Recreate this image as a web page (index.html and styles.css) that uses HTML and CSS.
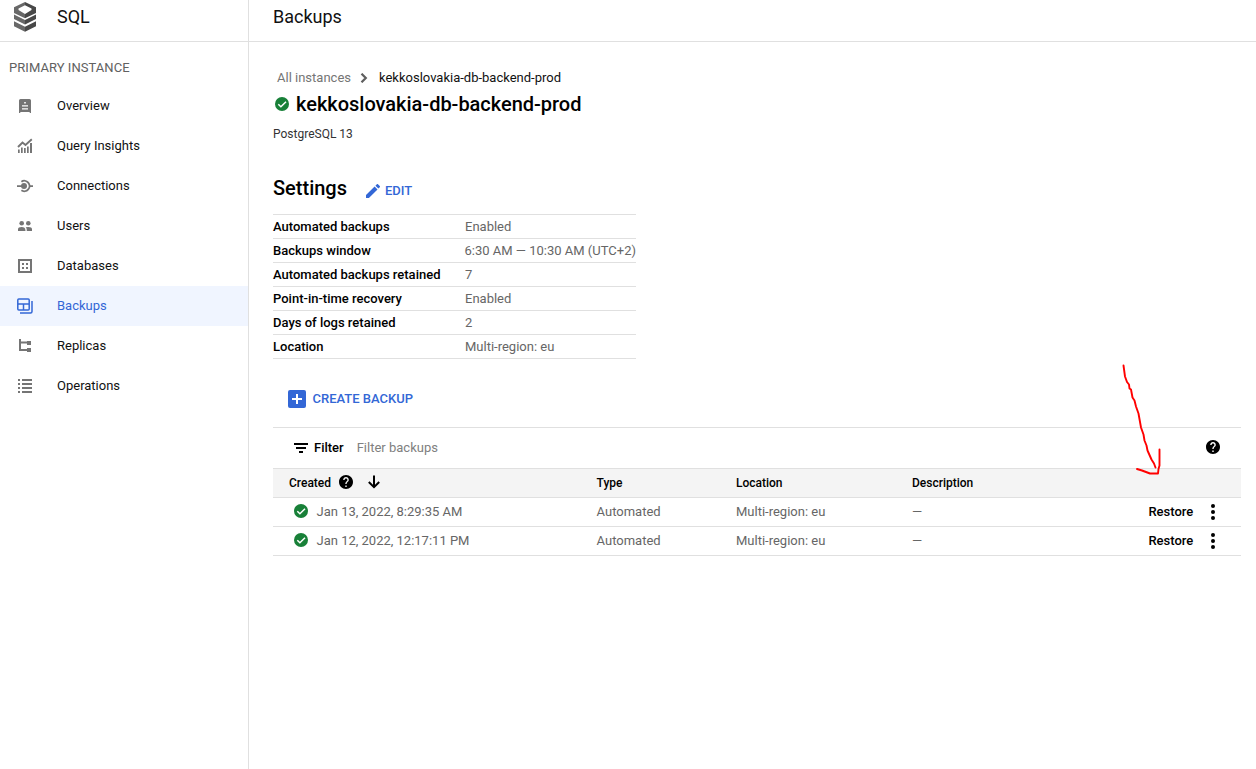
FILE: index.html
```html
<!DOCTYPE html>
<html lang="en">
<head>
<meta charset="utf-8">
<title>Backups – SQL</title>
<link rel="stylesheet" href="styles.css">
</head>
<body>
<svg class="defs" width="0" height="0">
  <symbol id="ok" viewBox="0 0 14 14"><circle cx="7" cy="7" r="7" fill="#188038"/><path d="M3.3 7.2 5.900 9.800 11 4.700" fill="none" stroke="#fff" stroke-width="1.500"/></symbol>
  <symbol id="help" viewBox="2 2 20 20"><path d="M12 2C6.480 2 2 6.480 2 12s4.480 10 10 10 10-4.480 10-10S17.520 2 12 2zm1 17h-2v-2h2v2zm2.070-7.750-.9.920C13.450 12.900 13 13.500 13 15h-2v-.5c0-1.100.45-2.100 1.170-2.830l1.240-1.260c.37-.36.59-.86.59-1.410 0-1.100-.9-2-2-2s-2 .9-2 2H8c0-2.210 1.790-4 4-4s4 1.790 4 4c0 .88-.36 1.680-.93 2.250z"/></symbol>
  <symbol id="more" viewBox="0 0 4 16"><circle cx="2" cy="2" r="2"/><circle cx="2" cy="8" r="2"/><circle cx="2" cy="14" r="2"/></symbol>
</svg>
<div class="app">
  <aside class="sidebar">
    <div class="product">
      <svg class="logo" width="22" height="30" viewBox="0 0 22 30">
        <path d="M11 0 0 5.300v5.700l11 5.300v-4.300L4.500 8V6.500L11 3.200z" fill="#686868"/>
        <path d="M11 0 22 5.300v5.700l-11 5.300v-4.300L17.500 8V6.500L11 3.200z" fill="#484848"/>
        <path d="M0 12.500 11 18v4.600L0 17.100z" fill="#686868"/><path d="M22 12.500 11 18v4.600l11-5.500z" fill="#484848"/>
        <path d="M0 19.300 11 24.800v4.900L0 24.200z" fill="#686868"/><path d="M22 19.300 11 24.800v4.900l11-5.500z" fill="#484848"/>
      </svg>
      <span class="product-name">SQL</span>
    </div>
    <h2 class="section-label">PRIMARY INSTANCE</h2>
    <nav class="nav">
      <a class="nav-item"><svg width="16" height="16" viewBox="0 0 16 16"><path fill-rule="evenodd" d="M3.500 1h9Q14 1 14 2.500V15h-1.300v-1H3.300v1H2V2.500Q2 1 3.500 1zM7.200 4v1.500h1.600V4zM5 7.300v1.200h6V7.300zm0 2.900v1.200h6v-1.200z"/></svg><span>Overview</span></a>
      <a class="nav-item"><svg width="16" height="16" viewBox="0 0 16 16"><path d="M1 11.500h1.700V15H1zM4 9.500h1.700V15H4zM7 10h1.700v5H7zM10 8.500h1.700V15H10zM13 5h2v10h-2z"/><path d="M1 9 5.500 4.500 8.500 7 14.800 1.300" fill="none" stroke="currentColor" stroke-width="1.900"/></svg><span>Query Insights</span></a>
      <a class="nav-item"><svg width="16" height="16" viewBox="0 0 16 16"><circle cx="7" cy="8" r="3"/><path d="M0 7.200h6v1.700H0zM12 7.200h4v1.700h-4z"/><path d="M4.400 3.700A5.200 5.200 0 1 1 4.400 12.300" fill="none" stroke="currentColor" stroke-width="1.900"/></svg><span>Connections</span></a>
      <a class="nav-item"><svg width="16" height="16" viewBox="0 0 16 16"><circle cx="4.700" cy="5.200" r="2.300"/><circle cx="11.300" cy="5.200" r="2.300"/><path d="M1 13v-1.800Q1 9 4.700 9q1.700 0 2.800.7Q8.500 10.400 8.500 13zM9.800 13q.2-2.500-1.100-3.700Q9.700 9 11.300 9 15 9 15 11.200V13z"/></svg><span>Users</span></a>
      <a class="nav-item"><svg width="16" height="16" viewBox="0 0 16 16"><path fill-rule="evenodd" d="M1 1h14v14H1zM3 3v10h10V3z"/><path d="M5 5h2v2H5zM9 5h2v2H9zM5 9h2v2H5zM9 9h2v2H9z"/></svg><span>Databases</span></a>
      <a class="nav-item active"><svg width="16" height="16" viewBox="0 0 16 16"><path d="M1.800.9h9.400q1 0 1 1v9.200q0 1-1 1H1.800q-1 0-1-1V1.900q0-1 1-1zM1 6h11M6.500 6v6M3 15h10.500q1.500 0 1.500-1.500V3" fill="none" stroke="currentColor" stroke-width="1.500"/></svg><span>Backups</span></a>
      <a class="nav-item"><svg width="16" height="16" viewBox="0 0 16 16"><path d="M2 1h2v2.500h6V3h4v4h-4V5.500H4V11h6v-1h4v4h-4v-1H2z"/></svg><span>Replicas</span></a>
      <a class="nav-item"><svg width="16" height="16" viewBox="0 0 16 16"><path d="M1 1h2v2H1zM1 5h2v2H1zM1 9h2v2H1zM1 13h2v2H1zM5 1h10v2H5zM5 5h10v2H5zM5 9h10v2H5zM5 13h10v2H5z"/></svg><span>Operations</span></a>
    </nav>
  </aside>
  <main class="main">
    <header class="page-header"><h1 class="page-title">Backups</h1></header>
    <div class="content">
      <div class="breadcrumb">
        <a class="crumb">All instances</a>
        <svg class="chevron" width="8" height="10" viewBox="0 0 8 10"><path d="M1.500.700 5.800 5 1.500 9.300" fill="none" stroke="#5f5f5f" stroke-width="2.200"/></svg>
        <span>kekkoslovakia-db-backend-prod</span>
      </div>
      <div class="instance"><svg width="14" height="14"><use href="#ok"/></svg><h2 class="instance-name">kekkoslovakia-db-backend-prod</h2></div>
      <p class="engine">PostgreSQL 13</p>
      <div class="settings-head">
        <h2 class="settings-title">Settings</h2>
        <a class="edit"><svg width="14" height="14" viewBox="3 3 18 18"><path fill="currentColor" d="M3 17.250V21h3.750L17.810 9.940l-3.750-3.750L3 17.250zM20.710 7.040a1 1 0 0 0 0-1.410l-2.340-2.340a1 1 0 0 0-1.410 0l-1.830 1.830 3.750 3.750 1.830-1.830z"/></svg><span>EDIT</span></a>
      </div>
      <dl class="settings">
        <div class="setting"><dt>Automated backups</dt><dd>Enabled</dd></div>
        <div class="setting"><dt>Backups window</dt><dd>6:30 AM — 10:30 AM (UTC+2)</dd></div>
        <div class="setting"><dt>Automated backups retained</dt><dd>7</dd></div>
        <div class="setting"><dt>Point-in-time recovery</dt><dd>Enabled</dd></div>
        <div class="setting"><dt>Days of logs retained</dt><dd>2</dd></div>
        <div class="setting"><dt>Location</dt><dd>Multi-region: eu</dd></div>
      </dl>
      <a class="create"><svg width="18" height="18" viewBox="0 0 18 18"><rect width="18" height="18" rx="2" fill="#3367d6"/><path d="M9 4v10M4 9h10" stroke="#fff" stroke-width="2"/></svg><span>CREATE BACKUP</span></a>
      <section class="backups">
        <div class="filter">
          <svg width="14" height="10" viewBox="0 0 14 10"><path d="M0 0h14v2H0zM2 4h10v2H2zM5 8h4v2H5z"/></svg>
          <span class="filter-label">Filter</span>
          <span class="filter-hint">Filter backups</span>
          <svg class="filter-help" width="14" height="14"><use href="#help"/></svg>
        </div>
        <div class="row head">
          <div class="created-head"><span>Created</span><svg width="14" height="14"><use href="#help"/></svg><svg width="12" height="14" viewBox="0 0 12 14"><path d="M6 .500v12M.8 7 6 12.200 11.200 7" fill="none" stroke="#000" stroke-width="2"/></svg></div>
          <div>Type</div><div>Location</div><div>Description</div><div></div><div></div>
        </div>
        <div class="row">
          <div class="created"><svg width="14" height="14"><use href="#ok"/></svg><span>Jan 13, 2022, 8:29:35 AM</span></div>
          <div>Automated</div><div>Multi-region: eu</div><div class="dash">—</div><a class="restore">Restore</a><svg width="4" height="16"><use href="#more"/></svg>
        </div>
        <div class="row">
          <div class="created"><svg width="14" height="14"><use href="#ok"/></svg><span>Jan 12, 2022, 12:17:11 PM</span></div>
          <div>Automated</div><div>Multi-region: eu</div><div class="dash">—</div><a class="restore">Restore</a><svg width="4" height="16"><use href="#more"/></svg>
        </div>
      </section>
    </div>
  </main>
</div>
<svg class="annotation" width="46" height="120" viewBox="1120 360 46 120"><path d="M1123.500 365.500l1.500 11 2 5.500 2 2.500.5 4 1.500 1 1.500 8 2 3 1.500 6 2.500 7 2.500 14 2.500 7 1 6 2 5 1 5 4 9 2.500 4 1.500 4M1159.500 449.500v16l-1 3.500-.5 4.500h-8l-4-1.500-4-1.500-5-1.500" fill="none" stroke="#f00" stroke-width="1.900" stroke-linejoin="round" stroke-linecap="round"/></svg>
</body>
</html>
```

FILE: styles.css
```css
* { box-sizing: border-box; }
body { margin: 0; background: #fff; color: #111; font: 13px/20px Roboto, sans-serif; overflow: hidden; }
h1, h2, p, dl, dd, dt { margin: 0; }
svg { display: block; flex: none; }
.defs { display: none; }
.app { display: flex; height: 769px; }

.sidebar { width: 249px; flex: none; border-right: 1px solid #e0e0e0; }
.product { display: flex; height: 42px; border-bottom: 1px solid #e0e0e0; padding: 2px 0 0 14px; }
.product-name { margin: 3px 0 0 21px; font-size: 18px; line-height: 24px; }
.section-label { margin: 16px 0 8px 9px; font-size: 13px; font-weight: 400; line-height: 20px; letter-spacing: 0.05px; color: #616161; }
.nav-item { display: flex; align-items: center; gap: 24px; height: 40px; padding-left: 17px; }
.nav-item svg { color: #757575; fill: #757575; }
.nav-item.active { background: #f0f5ff; color: #3367d6; }
.nav-item.active svg { color: #3367d6; }

.main { flex: 1; min-width: 0; }
.page-header { height: 42px; border-bottom: 1px solid #e0e0e0; padding: 5px 0 0 24px; }
.page-title { font-size: 18px; line-height: 24px; font-weight: 400; }
.content { padding: 26px 15px 0 24px; }
.breadcrumb { display: flex; align-items: center; padding-left: 4px; height: 20px; }
.crumb { color: #757575; }
.chevron { margin: 0 11px 0 9px; }
.instance { display: flex; align-items: center; gap: 7px; height: 24px; margin-top: 4px; padding-left: 2px; }
.instance-name, .settings-title { font-size: 20px; line-height: 24px; font-weight: 500; color: #000; }
.instance-name { letter-spacing: -0.02px; }
.engine { margin-top: 8px; font-size: 12px; line-height: 20px; color: #333; }
.settings-head { display: flex; margin-top: 32px; height: 38px; }
.edit { display: flex; align-items: center; height: 20px; gap: 5px; margin: 5px 0 0 19px; color: #3367d6; font-weight: 500; }
.settings { width: 363px; border-top: 1px solid #e0e0e0; }
.setting { display: flex; height: 24px; border-bottom: 1px solid #e0e0e0; line-height: 23px; white-space: nowrap; }
.setting dt { width: 192px; color: #000; font-weight: 500; }
.setting dd { color: #666; }
.create { display: flex; align-items: center; gap: 6.5px; height: 20px; margin: 30px 0 18px 15px; color: #3367d6; font-weight: 500; }

.backups { border-top: 1px solid #e0e0e0; }
.filter { display: flex; align-items: center; height: 41px; padding: 0 21px; border-bottom: 1px solid #e0e0e0; }
.filter-label { margin-left: 6px; color: #000; font-weight: 500; }
.filter-hint { margin-left: 13px; color: #808080; }
.filter-help { margin: 0 0 2px auto; }
.row { display: grid; grid-template-columns: 307.600px 139.400px 176px 236.400px 62.600px 4px; align-items: center; height: 29px; padding-left: 16px; border-bottom: 1px solid #e0e0e0; color: #666; }
.head { background: #f4f4f4; color: #000; font-size: 12px; font-weight: 500; }
.created-head, .created { display: flex; align-items: center; }
.created-head svg { margin: 0 0 2px 8px; }
.created-head svg + svg { margin-left: 15px; }
.created { gap: 8.500px; padding-left: 5px; }
.created svg { margin-bottom: 2px; }
.row > svg { fill: #000; }
.restore { color: #000; font-weight: 500; }
.annotation { position: absolute; left: 1120px; top: 360px; }
```
